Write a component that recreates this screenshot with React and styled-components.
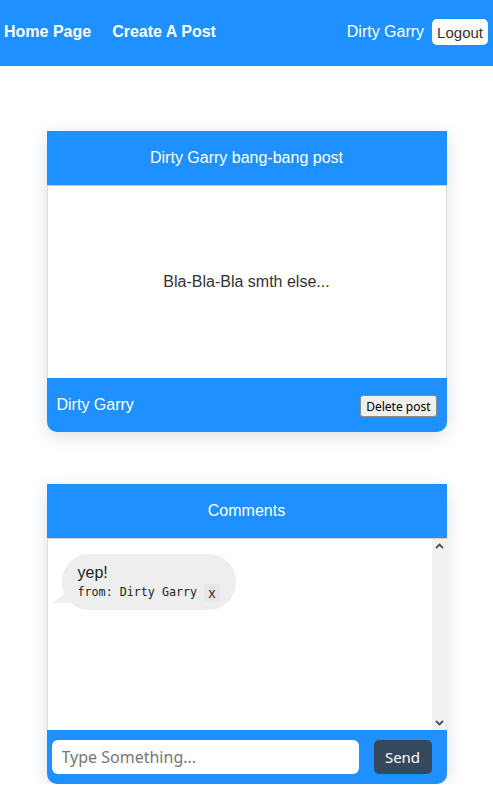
import React from "react";
import styled, { createGlobalStyle } from "styled-components";

const GlobalStyle = createGlobalStyle`
  body {
    margin: 0;
    background: #fff;
    font-family: "Liberation Sans", Arial, sans-serif;
  }
`;

const Nav = styled.nav`
  height: 66px;
  background: #1e90ff;
  display: flex;
  align-items: center;
  justify-content: space-between;
  padding: 0 5px 2px 4px;
  box-sizing: border-box;
`;

const NavLinks = styled.div`
  display: flex;
  gap: 21px;
`;

const NavLink = styled.a`
  color: #fff;
  font-weight: bold;
  font-size: 16px;
  text-decoration: none;
`;

const NavUser = styled.div`
  display: flex;
  align-items: center;
  gap: 8px;
  color: #fff;
  font-size: 16px;
`;

const LogoutButton = styled.button`
  height: 26px;
  padding: 0 5px;
  background: #fff;
  color: #333;
  border: none;
  border-radius: 5px;
  font-family: "Liberation Sans", Arial, sans-serif;
  font-size: 15px;
`;

const Card = styled.section`
  width: 400px;
  margin: ${(p) => p.$top}px auto 0;
  border-radius: 0 0 10px 10px;
  box-shadow: 0 4px 18px rgba(0, 0, 0, 0.13);
  overflow: hidden;
  background: #fff;
`;

const CardHeader = styled.header`
  height: 55px;
  background: #1e90ff;
  color: #fff;
  font-size: 16px;
  display: flex;
  align-items: center;
  justify-content: center;
  border-bottom: 1px solid #d0d0d0;
  box-sizing: border-box;
`;

const PostBody = styled.div`
  height: 192px;
  display: flex;
  align-items: center;
  justify-content: center;
  color: #333;
  font-size: 16px;
  border-left: 1px solid #ddd;
  border-right: 1px solid #ddd;
`;

const CardFooter = styled.footer`
  height: 54px;
  background: #1e90ff;
  display: flex;
  align-items: center;
  justify-content: space-between;
  padding: 0 ${(p) => p.$right}px 0 ${(p) => p.$left}px;
  gap: 15px;
  color: #fff;
  font-size: 16px;
`;

const DeleteButton = styled.button`
  height: 22px;
  padding: 0 5px;
  background: #efefef;
  border: 1px solid #8a8a8a;
  border-radius: 3px;
  font-family: "Noto Sans", "Open Sans", sans-serif;
  font-size: 12px;
  color: #000;
  margin-top: 2px;
`;

const CommentArea = styled.div`
  height: 191px;
  display: flex;
  border-left: 1px solid #ddd;
`;

const CommentList = styled.div`
  flex: 1;
  padding: 15px 0 0 5px;
`;

const Scrollbar = styled.div`
  width: 15px;
  background: #f1f1f1;
  display: flex;
  flex-direction: column;
  justify-content: space-between;
  align-items: center;
  padding: 4px 0;
  box-sizing: border-box;
`;

const Bubble = styled.div`
  position: relative;
  display: inline-block;
  margin-left: 9px;
  background: #eeeeee;
  border-radius: 27px;
  padding: 9px 16px 8px 16px;
  color: #222;

  &::before {
    content: "";
    position: absolute;
    left: -10px;
    bottom: 7px;
    width: 0;
    height: 0;
    border-top: 13px solid transparent;
    border-right: 18px solid #eeeeee;
  }
`;

const BubbleText = styled.div`
  font-size: 16px;
  line-height: 19px;
`;

const BubbleMeta = styled.div`
  display: flex;
  align-items: center;
  gap: 7px;
  font-family: "DejaVu Sans Mono", "Liberation Mono", monospace;
  font-size: 11.7px;
  color: #222;
`;

const RemoveButton = styled.button`
  border: none;
  background: #e6e6ec;
  border-radius: 3px;
  font-family: "Noto Sans", "Open Sans", sans-serif;
  font-size: 14px;
  color: #333;
  padding: 0 4px;
  height: 18px;
  line-height: 18px;
  margin-top: 2px;
`;

const MessageInput = styled.input`
  flex: 1;
  height: 34px;
  border: none;
  border-radius: 6px;
  padding: 0 10px;
  font-family: "Noto Sans", "Open Sans", sans-serif;
  font-size: 16px;
  outline: none;
  box-sizing: border-box;

  &::placeholder {
    color: #777;
  }
`;

const SendButton = styled.button`
  width: 58px;
  height: 34px;
  background: #34495e;
  color: #fff;
  border: none;
  border-radius: 5px;
  font-family: "Noto Sans", "Open Sans", sans-serif;
  font-size: 15px;
`;

const Chevron = ({ up }) => (
  <svg width="9" height="6" viewBox="0 0 9 6">
    <path
      d={up ? "M1 5 L4.5 1.5 L8 5" : "M1 1 L4.5 4.5 L8 1"}
      fill="none"
      stroke="#505050"
      strokeWidth="1.8"
    />
  </svg>
);

function App() {
  return (
    <>
      <GlobalStyle />
      <Nav>
        <NavLinks>
          <NavLink href="#">Home Page</NavLink>
          <NavLink href="#">Create A Post</NavLink>
        </NavLinks>
        <NavUser>
          Dirty Garry
          <LogoutButton>Logout</LogoutButton>
        </NavUser>
      </Nav>

      <Card $top={65}>
        <CardHeader>Dirty Garry bang-bang post</CardHeader>
        <PostBody>Bla-Bla-Bla smth else...</PostBody>
        <CardFooter $left={10} $right={10}>
          Dirty Garry
          <DeleteButton>Delete post</DeleteButton>
        </CardFooter>
      </Card>

      <Card $top={52}>
        <CardHeader>Comments</CardHeader>
        <CommentArea>
          <CommentList>
            <Bubble>
              <BubbleText>yep!</BubbleText>
              <BubbleMeta>
                from: Dirty Garry
                <RemoveButton>x</RemoveButton>
              </BubbleMeta>
            </Bubble>
          </CommentList>
          <Scrollbar>
            <Chevron up />
            <Chevron />
          </Scrollbar>
        </CommentArea>
        <CardFooter $left={5} $right={15}>
          <MessageInput placeholder="Type Something..." />
          <SendButton>Send</SendButton>
        </CardFooter>
      </Card>
    </>
  );
}

export default App;
